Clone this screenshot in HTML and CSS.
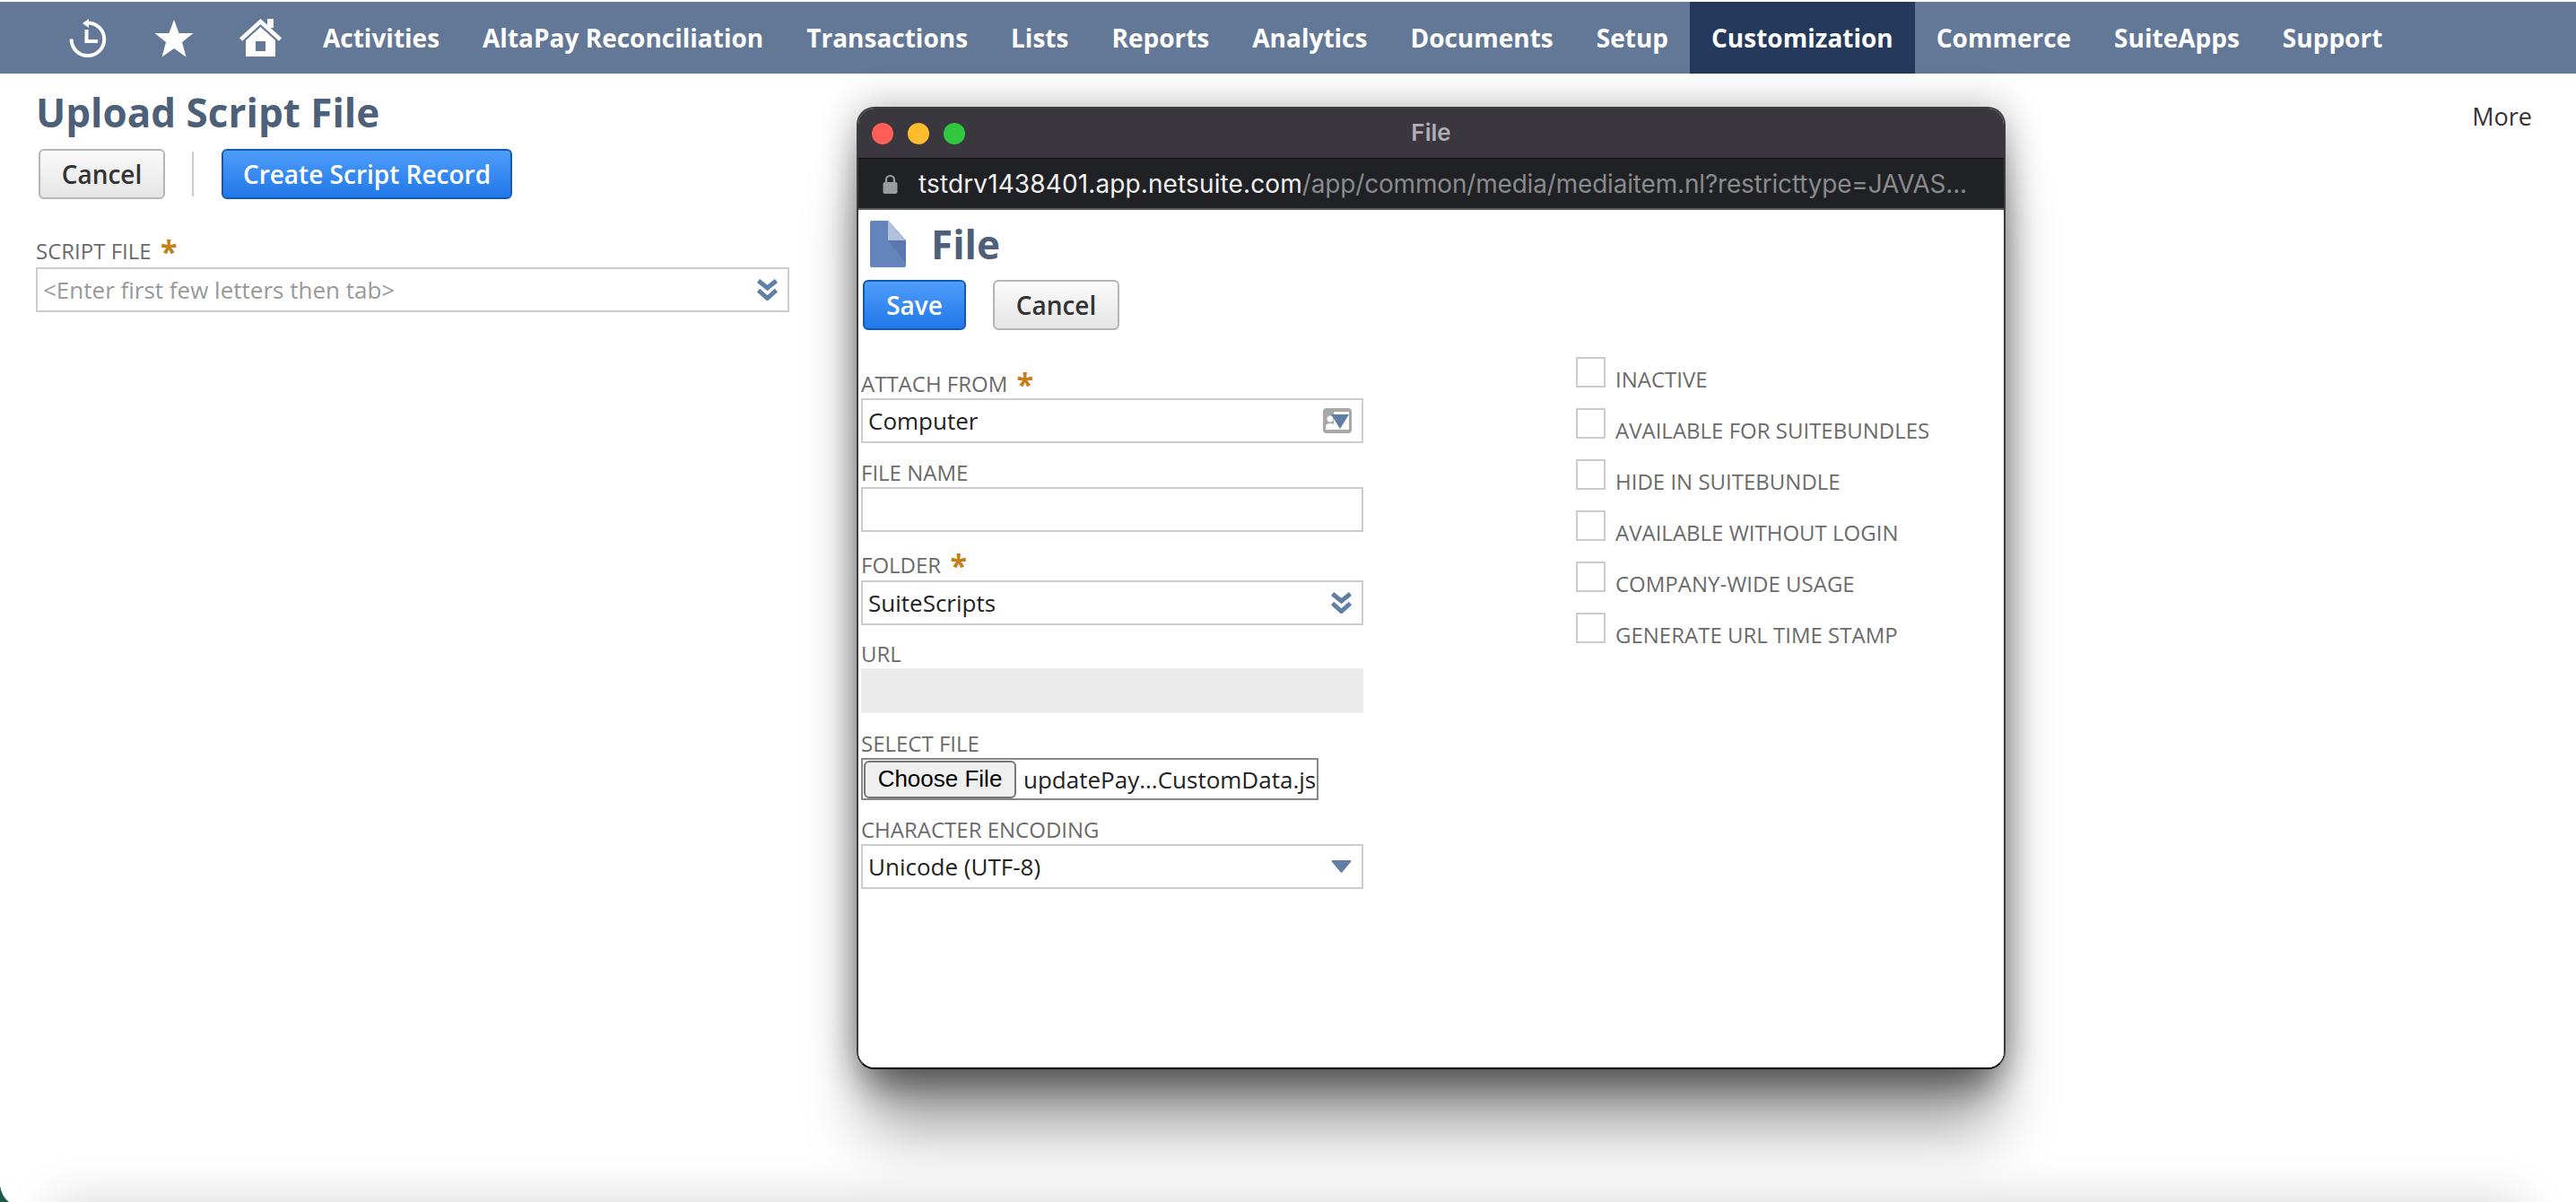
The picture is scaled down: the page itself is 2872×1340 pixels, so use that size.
FILE: index.html
```html
<!DOCTYPE html>
<html lang="en">

<head>
    <meta charset="UTF-8">
    <title>Upload Script File</title>
    <link rel="stylesheet" href="styles.css">
</head>

<body>
    <nav class="nav">
        <div class="nav-icons">
            <svg class="icon-clock" width="44" height="46" viewBox="0 0 44 46">
                <path d="M22 5.500A18.300 18.300 0 1 1 3.600 23.500" fill="none" stroke="#fff" stroke-width="4" />
                <polygon points="16,6 23,1 23,11" fill="#fff" />
                <path d="M20.500 13V26H33" fill="none" stroke="#fff" stroke-width="4" />
            </svg>
            <svg class="icon-star" width="44" height="42" viewBox="0 0 44 42">
                <polygon points="22,0 27.500,15 43.500,15 31,25 35.500,41.500 22,32 8.500,41.500 13,25 0.500,15 16.500,15" fill="#fff" />
            </svg>
            <svg class="icon-house" width="47" height="42" viewBox="0 0 47 42">
                <rect x="31" y="0" width="7" height="10" fill="#fff" />
                <path d="M1.500 23L23.500 3L45.500 23" fill="none" stroke="#fff" stroke-width="4.500" />
                <path d="M7 24L23.500 9L40 24V42H7ZM18 25V36H29V25Z" fill="#fff" fill-rule="evenodd" />
            </svg>
        </div>
        <a class="nav-item">Activities</a>
        <a class="nav-item">AltaPay Reconciliation</a>
        <a class="nav-item">Transactions</a>
        <a class="nav-item">Lists</a>
        <a class="nav-item">Reports</a>
        <a class="nav-item">Analytics</a>
        <a class="nav-item">Documents</a>
        <a class="nav-item">Setup</a>
        <a class="nav-item active">Customization</a>
        <a class="nav-item">Commerce</a>
        <a class="nav-item">SuiteApps</a>
        <a class="nav-item">Support</a>
    </nav>

    <main class="page">
        <div class="page-head">
            <h1 class="page-title">Upload Script File</h1>
            <span class="more">More</span>
        </div>
        <div class="page-buttons">
            <button class="btn btn-plain btn-cancel-main">Cancel</button>
            <span class="btn-sep"></span>
            <button class="btn btn-blue btn-create">Create Script Record</button>
        </div>
        <div class="script-field">
            <label class="label label-script">SCRIPT FILE <span class="req">*</span></label>
            <div class="control placeholder">
                <span>&lt;Enter first few letters then tab&gt;</span>
                <svg class="chevrons" width="23" height="24" viewBox="0 0 23 24">
                    <path d="M1.500 2L11.500 10L21.500 2M1.500 12.500L11.500 21.500L21.500 12.500" fill="none" stroke="#5f7fa5" stroke-width="5" />
                </svg>
            </div>
        </div>
    </main>

    <!-- edge of the window behind, only its shadow shows -->
    <div class="screen-shadow">
        <svg class="screen-corner" width="10" height="18" viewBox="0 0 10 18">
            <path d="M0 0Q2 12 10 18H0Z" fill="#1d5a4a" />
        </svg>
    </div>

    <!-- popup window sits on top of the page -->
    <section class="popup">
        <header class="popup-title">
            <div class="lights">
                <span class="light red"></span>
                <span class="light yellow"></span>
                <span class="light green"></span>
            </div>
            <span class="popup-name">File</span>
        </header>
        <div class="popup-url">
            <svg class="lock" width="17" height="22" viewBox="0 0 17 22">
                <path d="M4 10V6.500a4.500 4.500 0 0 1 9 0V10" fill="none" stroke="#9a9ca0" stroke-width="2.200" />
                <rect x="0.500" y="9" width="16" height="13" rx="2" fill="#9a9ca0" />
            </svg>
            <span class="url-host">tstdrv1438401.app.netsuite.com</span><span class="url-rest">/app/common/media/mediaitem.nl?restricttype=JAVAS...</span>
        </div>
        <div class="popup-body">
            <div class="file-head">
                <svg width="40" height="52" viewBox="0 0 40 52">
                    <path d="M2 0H20L40 22V50a2 2 0 0 1-2 2H2a2 2 0 0 1-2-2V2a2 2 0 0 1 2-2Z" fill="#6484bc" />
                    <path d="M20 0L40 22V47L20 22Z" fill="#5a78ad" />
                    <path d="M20 0L40 22H20Z" fill="#b0c1de" />
                </svg>
                <h2 class="file-title">File</h2>
            </div>
            <div class="file-buttons">
                <button class="btn btn-blue btn-save">Save</button>
                <button class="btn btn-plain btn-cancel">Cancel</button>
            </div>
            <div class="file-form">
                <div class="file-col">
                    <label class="label">ATTACH FROM <span class="req">*</span></label>
                    <div class="control">
                        <span>Computer</span>
                        <svg class="attach-icon" width="32" height="28" viewBox="0 0 32 28">
                            <rect width="32" height="28" rx="4" fill="#a8a8a8" />
                            <rect x="12" y="4" width="17" height="20" fill="#fff" />
                            <circle cx="8" cy="12" r="3.500" fill="#fff" />
                            <path d="M3 24V21q0-4 5-4t5 4V24Z" fill="#fff" />
                            <polygon points="9,7 29,7 19,23" fill="#5f7fa5" />
                        </svg>
                    </div>

                    <label class="label gap-file">FILE NAME</label>
                    <div class="control"></div>

                    <label class="label gap-folder">FOLDER <span class="req">*</span></label>
                    <div class="control">
                        <span>SuiteScripts</span>
                        <svg class="chevrons" width="23" height="24" viewBox="0 0 23 24">
                            <path d="M1.500 2L11.500 10L21.500 2M1.500 12.500L11.500 21.500L21.500 12.500" fill="none" stroke="#5f7fa5" stroke-width="5" />
                        </svg>
                    </div>

                    <label class="label gap-url">URL</label>
                    <div class="control control-off"></div>

                    <label class="label gap-select">SELECT FILE</label>
                    <div class="file-input">
                        <span class="choose">Choose File</span>
                        <span class="file-name">updatePay...CustomData.js</span>
                    </div>

                    <label class="label gap-encoding">CHARACTER ENCODING</label>
                    <div class="control">
                        <span>Unicode (UTF-8)</span>
                        <svg class="chevrons" width="23" height="14" viewBox="0 0 23 14">
                            <path d="M1.500 0H21.500a1 1 0 0 1 .8 1.600L12.500 13.200a1.300 1.300 0 0 1-2 0L.7 1.600A1 1 0 0 1 1.500 0Z" fill="#5f7fa5" />
                        </svg>
                    </div>
                </div>
                <ul class="check-list">
                    <li class="check"><span class="box"></span>INACTIVE</li>
                    <li class="check"><span class="box"></span>AVAILABLE FOR SUITEBUNDLES</li>
                    <li class="check"><span class="box"></span>HIDE IN SUITEBUNDLE</li>
                    <li class="check"><span class="box"></span>AVAILABLE WITHOUT LOGIN</li>
                    <li class="check"><span class="box"></span>COMPANY-WIDE USAGE</li>
                    <li class="check"><span class="box"></span>GENERATE URL TIME STAMP</li>
                </ul>
            </div>
        </div>
    </section>
</body>

</html>
```

FILE: styles.css
```css
html,
body {
    height: 100%;
}

body {
    margin: 0;
    position: relative;
    overflow: hidden;
    background: #fff;
    font-family: "Open Sans", sans-serif;
    color: #222;
}

.nav {
    display: flex;
    align-items: stretch;
    height: 80px;
    margin-top: 2px;
    background: #637897;
}

.nav-icons {
    display: flex;
    align-items: center;
    gap: 48px;
    padding-left: 76px;
    padding-right: 22px;
}

.icon-clock {
    margin-top: 2px;
}

.icon-star {
    margin-left: 4px;
    margin-top: 2px;
}

.icon-house {
    margin-left: 3px;
}

.nav-item {
    display: flex;
    align-items: center;
    padding: 0 24px;
    font-size: 28px;
    font-weight: 700;
    color: #fff;
    white-space: nowrap;
}

.nav-item.active {
    background: #24395b;
}

.page {
    padding: 0 49px 0 40px;
}

.page-head {
    display: flex;
    justify-content: space-between;
    align-items: flex-start;
    height: 84px;
}

.page-title {
    margin: 13px 0 0 0;
    font-size: 44px;
    line-height: 60px;
    font-weight: 700;
    color: #4d5f79;
}

.more {
    margin-top: 30px;
    font-size: 27px;
    line-height: 36px;
    color: #333;
}

.page-buttons {
    display: flex;
    align-items: center;
    padding-left: 3px;
}

.btn {
    box-sizing: border-box;
    height: 56px;
    padding: 0;
    border-radius: 6px;
    font-family: "Open Sans", sans-serif;
    font-size: 28px;
    font-weight: 600;
}

.btn-plain {
    border: 2px solid #b5b5b5;
    background: linear-gradient(#fafafa, #e5e5e5);
    color: #333;
}

.btn-blue {
    border: 2px solid #125ab2;
    background: linear-gradient(#4f9dfb, #2178e8);
    color: #fff;
}

.btn-cancel-main {
    width: 141px;
}

.btn-sep {
    width: 2px;
    height: 50px;
    margin: 0 31px 0 30px;
    background: #ccc;
}

.btn-create {
    width: 324px;
}

.script-field {
    width: 840px;
    margin-top: 45px;
}

.label {
    display: flex;
    align-items: flex-end;
    height: 26px;
    margin-bottom: 3px;
    font-size: 24px;
    line-height: 26px;
    color: #6b6b6b;
    white-space: pre;
}

.label-script {
    margin-bottom: 5px;
}

.req {
    font-size: 34px;
    line-height: 26px;
    height: 26px;
    font-weight: 700;
    color: #c57f16;
    margin-left: 4px;
}

.control {
    box-sizing: border-box;
    display: flex;
    justify-content: space-between;
    align-items: center;
    height: 50px;
    padding: 0 11px 0 6px;
    border: 2px solid #ccc;
    background: #fff;
    font-size: 26px;
    color: #222;
}

.placeholder {
    color: #999;
}

.control-off {
    background: #ebebeb;
    border-color: #ebebeb;
}

/* popup window */
.popup {
    position: absolute;
    left: 955px;
    top: 119px;
    box-sizing: border-box;
    width: 1281px;
    height: 1073px;
    display: flex;
    flex-direction: column;
    overflow: hidden;
    border: 2px solid #3c3c3c;
    border-bottom-color: #000;
    border-radius: 20px;
    background: #fff;
    box-shadow: 0 30px 40px -10px rgba(0, 0, 0, 0.4), 0 80px 70px -12px rgba(0, 0, 0, 0.35), 0 0 44px rgba(0, 0, 0, 0.3);
}

.popup-title {
    position: relative;
    flex: none;
    display: flex;
    align-items: center;
    justify-content: center;
    height: 55px;
    background: #3a373e;
    border-bottom: 1px solid #0e0e10;
}

.lights {
    position: absolute;
    left: 15px;
    display: flex;
    gap: 16px;
}

.light {
    width: 24px;
    height: 24px;
    border-radius: 50%;
}

.red {
    background: #ff5f57;
}

.yellow {
    background: #febc2e;
}

.green {
    background: #31c840;
}

.popup-name {
    margin-top: -3px;
    font-family: Inter, sans-serif;
    font-size: 26px;
    font-weight: 600;
    color: #b1aeb4;
}

.popup-url {
    flex: none;
    display: flex;
    align-items: center;
    height: 55px;
    padding-left: 27px;
    background: #202124;
    border-bottom: 2px solid #5c5c5e;
    font-family: Inter, sans-serif;
    font-size: 28px;
    white-space: nowrap;
}

.lock {
    margin-right: 23px;
}

.url-host {
    color: #f0f0f0;
    letter-spacing: 0.12px;
}

.url-rest {
    color: #8a8a8c;
    letter-spacing: -0.18px;
}

.popup-body {
    flex: 1;
    padding: 12px 0 0 3px;
    background: #fff;
}

.file-head {
    display: flex;
    align-items: center;
    gap: 28px;
    height: 52px;
    padding-left: 10px;
}

.file-title {
    margin: 0;
    font-size: 44px;
    font-weight: 700;
    color: #4d5f79;
}

.file-buttons {
    display: flex;
    gap: 30px;
    margin-top: 14px;
    padding-left: 2px;
}

.btn-save {
    width: 115px;
}

.btn-cancel {
    width: 141px;
}

.file-form {
    display: flex;
    margin-top: 47px;
}

.file-col {
    width: 560px;
}

.gap-file {
    margin-top: 20px;
}

.gap-folder {
    margin-top: 24px;
    margin-bottom: 4px;
}

.gap-url {
    margin-top: 19px;
}

.gap-select {
    margin-top: 21px;
}

.gap-encoding {
    margin-top: 20px;
}

.file-input {
    box-sizing: border-box;
    display: flex;
    align-items: center;
    width: 510px;
    height: 47px;
    padding-left: 1px;
    border: 2px solid #888;
    font-size: 26px;
}

.choose {
    box-sizing: border-box;
    display: flex;
    justify-content: center;
    align-items: center;
    width: 170px;
    height: 42px;
    border: 2px solid #767676;
    border-radius: 6px;
    background: #efefef;
    font-family: "Liberation Sans", sans-serif;
    color: #000;
}

.file-name {
    margin-left: 8px;
    color: #222;
    white-space: nowrap;
}

.check-list {
    list-style: none;
    margin: -17px 0 0 237px;
    padding: 0;
}

.check {
    display: flex;
    align-items: baseline;
    height: 34px;
    margin-bottom: 23px;
    font-size: 24px;
    line-height: 26px;
    color: #6b6b6b;
    white-space: nowrap;
}

.box {
    box-sizing: border-box;
    flex: none;
    width: 33px;
    height: 34px;
    margin-right: 11px;
    border: 2px solid #ccc;
    background: #fff;
}

.screen-shadow {
    position: absolute;
    left: 0;
    right: 0;
    bottom: 0;
    height: 80px;
    overflow: hidden;
}

.screen-shadow::before {
    content: "";
    position: absolute;
    left: 60px;
    right: 60px;
    top: 85px;
    height: 100px;
    box-shadow: 0 0 60px rgba(0, 0, 0, 0.2);
}

.screen-corner {
    position: absolute;
    left: 0;
    bottom: 0;
}
```
